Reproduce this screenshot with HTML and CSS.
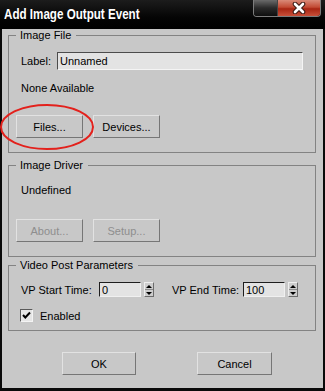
FILE: index.html
```html
<!DOCTYPE html>
<html lang="en">
<head>
    <meta charset="UTF-8">
    <meta name="viewport" content="width=device-width, initial-scale=1.0">
    <title>Add Image Output Event</title>
    <link rel="stylesheet" href="styles.css">
</head>
<body>
    <div class="window">
        <!-- title bar -->
        <div class="titlebar">
            <span class="title">Add Image Output Event</span>
            <div class="caption_btns">
                <span class="cap_min"></span>
                <span class="cap_close">
                    <svg width="14" height="12" viewBox="0 0 14 12">
                        <path d="M3 2 L11 10 M11 2 L3 10" stroke="#3a1a14" stroke-width="4.6" stroke-linecap="round"/>
                        <path d="M3 2 L11 10 M11 2 L3 10" stroke="#fff" stroke-width="2.6" stroke-linecap="round"/>
                    </svg>
                </span>
            </div>
        </div>

        <div class="client">
            <!-- Image File -->
            <fieldset class="group group_file">
                <legend>Image File</legend>
                <div class="label_row">
                    <span>Label:</span>
                    <input type="text" class="text_field" value="Unnamed">
                </div>
                <div class="status">None Available</div>
                <div class="btn_row">
                    <button class="btn">Files...</button>
                    <button class="btn">Devices...</button>
                </div>
            </fieldset>

            <!-- Image Driver -->
            <fieldset class="group group_driver">
                <legend>Image Driver</legend>
                <div class="status">Undefined</div>
                <div class="btn_row">
                    <button class="btn" disabled>About...</button>
                    <button class="btn" disabled>Setup...</button>
                </div>
            </fieldset>

            <!-- Video Post Parameters -->
            <fieldset class="group group_vp">
                <legend>Video Post Parameters</legend>
                <div class="vp_row">
                    <span class="start_label">VP Start Time:</span>
                    <input type="text" class="num_field" value="0">
                    <span class="spinner"><i class="up"></i><i class="down"></i></span>
                    <span class="end_label">VP End Time:</span>
                    <input type="text" class="num_field" value="100">
                    <span class="spinner"><i class="up"></i><i class="down"></i></span>
                </div>
                <label class="check_row">
                    <span class="check_box">
                        <svg width="11" height="11" viewBox="0 0 11 11">
                            <path d="M2 5 L4.3 7.5 L9 2.5" stroke="#000" stroke-width="2" fill="none"/>
                        </svg>
                    </span>
                    Enabled
                </label>
            </fieldset>

            <div class="dialog_btns">
                <button class="btn btn_ok">OK</button>
                <button class="btn btn_cancel">Cancel</button>
            </div>
        </div>

        <!-- red annotation ring -->
        <svg class="mark" width="96" height="48" viewBox="0 0 96 48">
            <ellipse cx="47" cy="23" rx="46" ry="22" fill="none" stroke="#e3211c" stroke-width="2"/>
        </svg>
    </div>
</body>
</html>
```

FILE: styles.css
```css
*{
    margin: 0;
    padding: 0;
    box-sizing: border-box;
}
body{
    background-color: #000;
    font-family: "Liberation Sans", Arial, sans-serif;
    font-size: 11px;
    color: #000;
}
.window{
    width: 325px;
    height: 391px;
    background-color: #0a0a0a;
    position: relative;
}

/* title bar */
.titlebar{
    height: 29px;
    display: flex;
    justify-content: space-between;
    align-items: flex-start;
    background: linear-gradient(180deg, #1c1c1c 0%, #050505 60%, #000 100%);
}
.title{
    display: inline-block;
    color: #fff;
    font-weight: bold;
    font-size: 14px;
    line-height: 16px;
    margin: 6px 0 0 4px;
    white-space: nowrap;
    transform: scaleX(0.83);/* narrow caption font */
    transform-origin: left top;
}
.caption_btns{
    display: flex;
    width: 68px;
    height: 17px;
    margin-right: 4px;
    border: 1px solid #7d7d7d;
    border-top: none;
    border-radius: 0 0 4px 4px;
    overflow: hidden;
}
.cap_min{
    width: 24px;
    background: linear-gradient(180deg, #6a6a6a 0%, #2a2a2a 50%, #0e0e0e 100%);
    border-right: 1px solid #444;
}
.cap_close{
    flex: 1;
    display: flex;
    align-items: center;
    justify-content: center;
    background: linear-gradient(180deg, #d98a78 0%, #c24a34 45%, #a82512 55%, #c8503a 100%);
}

/* dialog body */
.client{
    margin: 0 2px;
    height: 359px;
    padding: 0 7px 0 6px;
    background-color: #c8c8c8;
}
.group{
    border: 1px solid #838383;
    padding: 0 7px;
    min-width: 0;
}
.group legend{
    margin-left: 0;
    padding: 0 5px 0 4px;
    line-height: 12px;
}
.group_file{
    padding-top: 11px;
    padding-bottom: 14px;
}
.group_driver{
    margin-top: 6px;
    padding-top: 13px;
    padding-bottom: 14px;
}
.group_vp{
    margin-top: 2px;
    padding-top: 11px;
    padding-bottom: 8px;
}

.label_row{
    display: flex;
    align-items: center;
    height: 18px;
    padding-left: 5px;
}
.label_row span{
    width: 36px;
}
.text_field{
    width: 246px;
    height: 18px;
    font: inherit;
    padding-left: 2px;
    background-color: #e3e3e3;
    border: 1px solid;
    border-color: #4c4c4c #f4f4f4 #f4f4f4 #4c4c4c;
    outline: none;
}
.status{
    line-height: 13px;
    padding-left: 5px;
    margin-top: 12px;
}
.group_driver .status{
    margin-top: 0;
}
.btn_row{
    display: flex;
    gap: 10px;
    margin-top: 20px;
}
.group_driver .btn_row{
    margin-top: 22px;
}
.btn{
    width: 67px;
    height: 23px;
    font: inherit;
    color: #000;
    background-color: #c8c8c8;
    border: 1px solid;
    border-color: #e2e2e2 #767676 #767676 #e2e2e2;
}
.btn:disabled{
    color: #8e8e8e;
}

/* video post row */
.vp_row{
    display: flex;
    align-items: center;
    height: 15px;
    padding-left: 5px;
}
.start_label{
    width: 78px;
}
.end_label{
    width: 71px;
    margin-left: 18px;
}
.num_field{
    width: 42px;
    height: 15px;
    font: inherit;
    line-height: 13px;
    padding-left: 2px;
    background-color: #e3e3e3;
    border: 1px solid;
    border-color: #1e1e1e #f0f0f0 #f0f0f0 #1e1e1e;
    outline: none;
}
.spinner{
    width: 10px;
    height: 15px;
    margin-left: 3px;
    display: flex;
    flex-direction: column;
    background-color: #cdcdcd;
    border: 1px solid;
    border-color: #eee #6c6c6c #6c6c6c #eee;
}
.spinner i{
    flex: 1;
    display: flex;
    align-items: center;
    justify-content: center;
}
.spinner .up{
    border-bottom: 1px solid #8a8a8a;
}
.spinner .up::after{
    content: "";
    border-left: 3px solid transparent;
    border-right: 3px solid transparent;
    border-bottom: 3px solid #000;
}
.spinner .down::after{
    content: "";
    border-left: 3px solid transparent;
    border-right: 3px solid transparent;
    border-top: 3px solid #000;
}

.check_row{
    display: flex;
    align-items: center;
    gap: 7px;
    height: 13px;
    margin-top: 12px;
    padding-left: 4px;
}
.check_box{
    width: 13px;
    height: 13px;
    display: flex;
    align-items: center;
    justify-content: center;
    background-color: #e6e6e6;
    border: 1px solid;
    border-color: #5a5a5a #f4f4f4 #f4f4f4 #5a5a5a;
}

.dialog_btns{
    display: flex;
    gap: 61px;
    margin-top: 21px;
    padding-left: 54px;
}
.btn_ok{
    width: 74px;
}
.btn_cancel{
    width: 75px;
}

/* annotation over the Files button */
.mark{
    position: absolute;
    left: 0;
    top: 104px;
}
```
